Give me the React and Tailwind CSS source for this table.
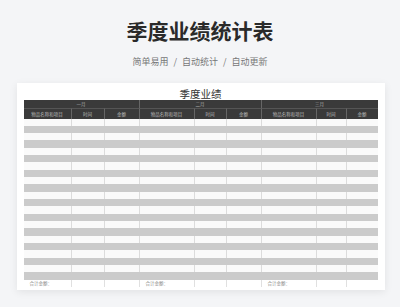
import React from "react";

const cols = [
  "物品名称和项目", "时间", "金额",
  "物品名称和项目", "时间", "金额",
  "物品名称和项目", "时间", "金额",
];
const months = ["一月", "二月", "三月"];
const rows = Array.from({ length: 22 }, (_, i) => i);

export default function App() {
  return (
    <div
      className="w-[400px] h-[307px] bg-[#f4f5f7] flex flex-col items-center overflow-hidden"
      style={{ fontFamily: '"Noto Sans CJK SC", "Noto Sans", sans-serif' }}
    >
      <div className="pt-[17px] text-[21px] leading-[26px] font-bold text-[#2a2a2a]">
        季度业绩统计表
      </div>
      <div className="mt-[12px] text-[9px] leading-[14px] text-[#777] flex items-center gap-[5px]">
        <span>简单易用</span>
        <span>/</span>
        <span>自动统计</span>
        <span>/</span>
        <span>自动更新</span>
      </div>
      <div className="mt-[14px] w-[368px] ml-[1px] h-[207px] bg-white shadow-[0_2px_8px_rgba(0,0,0,0.08)] flex flex-col items-center pt-[4px]">
        <div className="h-[13px] leading-[13px] text-[10.5px] text-[#333]">季度业绩</div>
        <div className="w-[354px] grid grid-cols-[47px_33px_35px_55px_32px_35px_55px_30px_32px]">
          {months.map((m, i) => (
            <div
              key={m}
              className={`col-span-3 h-[8px] bg-[#3a3a3a] text-[#aaa] text-[4.5px] leading-[8px] text-center ${i > 0 ? "border-l border-[#666]" : ""}`}
            >
              {m}
            </div>
          ))}
          {cols.map((c, i) => (
            <div
              key={"h" + i}
              className={`h-[10.5px] bg-[#3a3a3a] text-[#bbb] text-[4.5px] leading-[10.5px] text-center border-t border-[#555] ${i > 0 ? "border-l border-l-[#666]" : ""}`}
            >
              {c}
            </div>
          ))}
          {rows.map((r) =>
            cols.map((c, i) => (
              <div
                key={r + "-" + i}
                className={
                  r % 2 === 0
                    ? `h-[7.34px] bg-[#fafafa] ${i > 0 ? "border-l border-[#dcdcdc]" : ""}`
                    : "h-[7.34px] bg-[#cbcbcb]"
                }
              />
            ))
          )}
          {cols.map((c, i) => (
            <div
              key={"f" + i}
              className={`h-[7px] bg-white text-[4.5px] leading-[7px] text-[#888] pl-[6px] whitespace-nowrap ${i > 0 ? "border-l border-[#e0e0e0]" : ""}`}
            >
              {i % 3 === 0 ? "合计金额：" : ""}
            </div>
          ))}
        </div>
      </div>
    </div>
  );
}
